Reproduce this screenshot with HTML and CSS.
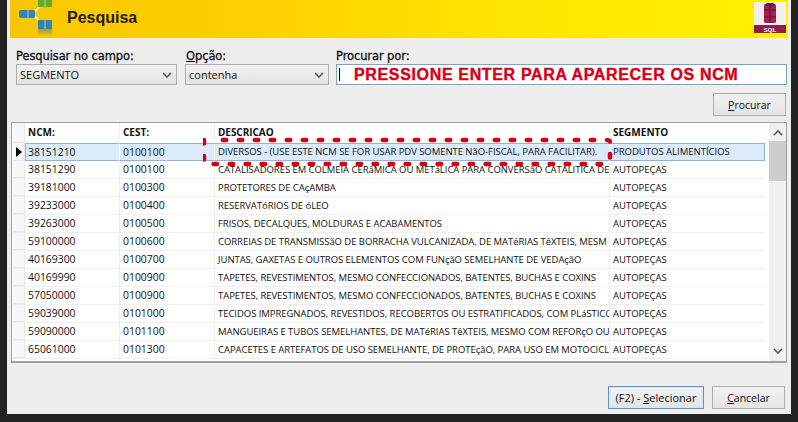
FILE: index.html
```html
<!DOCTYPE html>
<html lang="pt-BR">
<head>
<meta charset="utf-8">
<title>Pesquisa</title>
<link rel="stylesheet" href="styles.css">
</head>
<body>
<div class="window">
  <header class="banner">
    <svg class="logo" width="42" height="38" viewBox="0 0 42 38">
      <defs>
        <linearGradient id="fade" x1="0" y1="0" x2="0" y2="1"><stop offset="0" stop-color="#9c9a58"/><stop offset="1" stop-color="#f8c800"/></linearGradient>
      </defs>
      <path d="M25 12 L29 7 M25 16 L29 21" stroke="#f8f0c0" stroke-width="2" fill="none"/>
      <rect x="28" y="-2" width="14" height="9" fill="#62ac2c"/>
      <rect x="34.500" y="-2" width="1" height="9" fill="#b8dc80"/>
      <rect x="9" y="10" width="16" height="8" rx="2" fill="#2f86b4"/>
      <rect x="17.500" y="10" width="1" height="8" fill="#a8d0e8"/>
      <rect x="28" y="20" width="14" height="9" fill="#2f86b4"/>
      <rect x="34.500" y="20" width="1" height="9" fill="#a8d0e8"/>
      <rect x="28" y="29" width="14" height="7" fill="url(#fade)"/>
    </svg>
    <h1 class="banner-title">Pesquisa</h1>
    <div class="sql-badge">
      <svg width="32" height="31" viewBox="0 0 32 31">
        <rect width="32" height="31" fill="#f1eeee"/>
        <rect y="23" width="32" height="8" fill="#8e1c48"/>
        <rect x="10" y="2" width="12" height="19" rx="1.500" fill="#a51f50"/>
        <rect x="12" y="1" width="8" height="3" rx="1" fill="#6d1538"/>
        <path d="M10 8H22M10 15H22M16 4V21" stroke="#5d1030" fill="none"/>
        <text x="16" y="29.500" class="sql-text" text-anchor="middle">SQL</text>
      </svg>
    </div>
  </header>

  <main class="content">
    <section class="filters">
      <div class="field field-campo">
        <label class="field-label">Pesquisar no campo:</label>
        <div class="select"><span>SEGMENTO</span><svg class="chev" width="10" height="6" viewBox="0 0 10 6"><path d="M1 1l4 4 4-4" stroke="#555" stroke-width="1.600" fill="none"/></svg></div>
      </div>
      <div class="field field-opcao">
        <label class="field-label"><u>O</u>pção:</label>
        <div class="select"><span>contenha</span><svg class="chev" width="10" height="6" viewBox="0 0 10 6"><path d="M1 1l4 4 4-4" stroke="#555" stroke-width="1.600" fill="none"/></svg></div>
      </div>
      <div class="field field-busca">
        <label class="field-label">Procurar por:</label>
        <div class="search-box"><i class="caret"></i><span class="hint">PRESSIONE ENTER PARA APARECER OS NCM</span></div>
      </div>
    </section>

    <div class="search-action">
      <button class="btn btn-search"><u>P</u>rocurar</button>
    </div>

    <section class="grid">
      <div class="table-area">
        <div class="row head">
          <div class="ind"></div><div class="c c1">NCM:</div><div class="c c2">CEST:</div><div class="c c3">DESCRICAO</div><div class="c c4">SEGMENTO</div>
        </div>
        <div class="row selected">
          <div class="ind"><i class="arrow"></i></div><div class="c c1">38151210</div><div class="c c2">0100100</div><div class="c c3">DIVERSOS - (USE ESTE NCM SE FOR USAR PDV SOMENTE NãO-FISCAL, PARA FACILITAR).</div><div class="c c4">PRODUTOS ALIMENTÍCIOS</div>
        </div>
        <div class="row">
          <div class="ind"></div><div class="c c1">38151290</div><div class="c c2">0100100</div><div class="c c3">CATALISADORES EM COLMEIA CERâMICA OU METáLICA PARA CONVERSãO CATALITICA DE</div><div class="c c4">AUTOPEÇAS</div>
        </div>
        <div class="row">
          <div class="ind"></div><div class="c c1">39181000</div><div class="c c2">0100300</div><div class="c c3">PROTETORES DE CAçAMBA</div><div class="c c4">AUTOPEÇAS</div>
        </div>
        <div class="row">
          <div class="ind"></div><div class="c c1">39233000</div><div class="c c2">0100400</div><div class="c c3">RESERVATóRIOS DE óLEO</div><div class="c c4">AUTOPEÇAS</div>
        </div>
        <div class="row">
          <div class="ind"></div><div class="c c1">39263000</div><div class="c c2">0100500</div><div class="c c3">FRISOS, DECALQUES, MOLDURAS E ACABAMENTOS</div><div class="c c4">AUTOPEÇAS</div>
        </div>
        <div class="row">
          <div class="ind"></div><div class="c c1">59100000</div><div class="c c2">0100600</div><div class="c c3">CORREIAS DE TRANSMISSãO DE BORRACHA VULCANIZADA, DE MATéRIAS TêXTEIS, MESM</div><div class="c c4">AUTOPEÇAS</div>
        </div>
        <div class="row">
          <div class="ind"></div><div class="c c1">40169300</div><div class="c c2">0100700</div><div class="c c3">JUNTAS, GAXETAS E OUTROS ELEMENTOS COM FUNçãO SEMELHANTE DE VEDAçãO</div><div class="c c4">AUTOPEÇAS</div>
        </div>
        <div class="row">
          <div class="ind"></div><div class="c c1">40169990</div><div class="c c2">0100900</div><div class="c c3">TAPETES, REVESTIMENTOS, MESMO CONFECCIONADOS, BATENTES, BUCHAS E COXINS</div><div class="c c4">AUTOPEÇAS</div>
        </div>
        <div class="row">
          <div class="ind"></div><div class="c c1">57050000</div><div class="c c2">0100900</div><div class="c c3">TAPETES, REVESTIMENTOS, MESMO CONFECCIONADOS, BATENTES, BUCHAS E COXINS</div><div class="c c4">AUTOPEÇAS</div>
        </div>
        <div class="row">
          <div class="ind"></div><div class="c c1">59039000</div><div class="c c2">0101000</div><div class="c c3">TECIDOS IMPREGNADOS, REVESTIDOS, RECOBERTOS OU ESTRATIFICADOS, COM PLáSTICO</div><div class="c c4">AUTOPEÇAS</div>
        </div>
        <div class="row">
          <div class="ind"></div><div class="c c1">59090000</div><div class="c c2">0101100</div><div class="c c3">MANGUEIRAS E TUBOS SEMELHANTES, DE MATéRIAS TêXTEIS, MESMO COM REFORçO OU</div><div class="c c4">AUTOPEÇAS</div>
        </div>
        <div class="row">
          <div class="ind"></div><div class="c c1">65061000</div><div class="c c2">0101300</div><div class="c c3">CAPACETES E ARTEFATOS DE USO SEMELHANTE, DE PROTEçãO, PARA USO EM MOTOCICLE</div><div class="c c4">AUTOPEÇAS</div>
        </div>
      </div>
      <div class="scrollbar">
        <svg class="sb-arrow" width="10" height="6" viewBox="0 0 10 6"><path d="M1 5l4-4 4 4" stroke="#555" stroke-width="1.600" fill="none"/></svg>
        <div class="sb-track"><div class="sb-thumb"></div></div>
        <svg class="sb-arrow" width="10" height="6" viewBox="0 0 10 6"><path d="M1 1l4 4 4-4" stroke="#555" stroke-width="1.600" fill="none"/></svg>
      </div>
      <svg class="highlight" width="420" height="40" viewBox="0 0 420 40">
        <path d="M1 4V25Q1 28 6 28H398Q404 28 407 24V6Q407 4 402 4H12" fill="none" stroke="#d8000f" stroke-width="4.500" stroke-linecap="round" stroke-dasharray="3.500 12.500"/>
      </svg>
    </section>

    <footer class="actions">
      <button class="btn btn-primary">(F2) - <u>S</u>elecionar</button>
      <button class="btn btn-cancel"><u>C</u>ancelar</button>
    </footer>
  </main>
</div>
</body>
</html>
```

FILE: styles.css
```css
* { box-sizing: border-box; }
html, body { margin: 0; padding: 0; }
body {
  width: 798px;
  height: 422px;
  overflow: hidden;
  background: #222;
  font-family: "Open Sans", "Noto Sans", sans-serif;
  color: #111;
}
.window {
  width: 784px;
  height: 414px;
  margin-left: 7px;
  padding: 0 3px;
  background: #eee;
}
.banner {
  height: 38px;
  display: flex;
  align-items: center;
  background: linear-gradient(90deg, #f8c600 0%, #fdd000 30%, #ffe800 70%, #fff000 100%);
  overflow: hidden;
}
.logo { flex: none; }
.banner-title {
  margin: -2px 0 0 15px;
  font: bold 16px "Liberation Sans", sans-serif;
  color: #2a1a00;
  flex: 1;
}
.sql-badge { flex: none; align-self: flex-start; margin: 2px 2px 0 0; line-height: 0; }
.sql-text { font: bold 6px "Liberation Sans", sans-serif; fill: #fff; }
.content { padding: 10px 0 0 1px; }
.filters { display: flex; gap: 11px; padding-left: 5px; }
.field { display: flex; flex-direction: column; }
.field-campo { width: 161px; }
.field-opcao { width: 144px; margin-left: -3px; }
.field-opcao .field-label { padding-left: 1px; }
.field-busca { width: 451px; margin-left: -4px; }
.field-label {
  font: 11.500px "DejaVu Sans", sans-serif;
  -webkit-text-stroke: .3px #111;
  height: 16px;
  line-height: 16px;
  letter-spacing: -.1px;
  white-space: nowrap;
}
.select {
  height: 21px;
  border: 1px solid #adadad;
  background: linear-gradient(#f2f2f2, #e3e3e3);
  display: flex;
  align-items: center;
  justify-content: space-between;
  padding: 0 3px;
  font-size: 11px;
}
.chev { margin-right: 1px; }
.search-box {
  height: 21px;
  background: #fff;
  border: 1px solid #7aa3c8;
  display: flex;
  align-items: center;
  padding-left: 2px;
}
.caret { width: 1px; height: 13px; background: #000; flex: none; }
.hint {
  margin-left: 14px;
  font: bold 16px "Liberation Sans", sans-serif;
  letter-spacing: .65px;
  -webkit-text-stroke: .4px #d6001a;
  color: #d6001a;
  white-space: nowrap;
}
.search-action { display: flex; justify-content: flex-end; padding: 8px 2px 0 0; height: 38px; }
.btn {
  font-family: "Open Sans", "Noto Sans", sans-serif;
  font-size: 11px;
  color: #111;
  background: linear-gradient(#f2f2f2, #e4e4e4);
  border: 1px solid #adadad;
  padding: 0;
  height: 23px;
}
.btn-search { width: 73px; font-size: 10.500px; }
.grid {
  position: relative;
  width: 776px;
  height: 241px;
  border: 1px solid #a0a0a0;
  border-bottom-width: 2px;
  background: #fff;
  display: flex;
  justify-content: space-between;
  padding: 0 0 0 1px;
  margin-top: -1px;
}
.table-area { width: 752px; overflow: hidden; }
.row {
  display: flex;
  height: 18px;
  font-size: 9.500px;
  line-height: 17px;
  border-bottom: 1px solid #efefef;
}
.ind {
  width: 12px;
  flex: none;
  border-right: 1px solid #e8e8e8;
  background: #f6f6f6;
  display: flex;
  align-items: center;
  justify-content: center;
  border-bottom: 1px solid #e6e6e6;
}
.arrow {
  width: 0;
  height: 0;
  border-left: 6px solid #000;
  border-top: 5px solid transparent;
  border-bottom: 5px solid transparent;
}
.c {
  flex: none;
  padding-left: 3px;
  border-right: 1px solid #efefef;
  overflow: hidden;
  white-space: nowrap;
}
.c1 { width: 95px; font-size: 10.400px; }
.c2 { width: 95px; font-size: 10.400px; }
.c3 { width: 395px; letter-spacing: -.05px; }
.c4 { width: 155px; border-right: none; }
.head {
  height: 20px;
  line-height: 19px;
  font-weight: 700;
  font-size: 10px;
  border-bottom: none;
}
.head .c { font-size: 10px; }
.selected { border-bottom: none; line-height: 16px; }
.selected .c {
  background: #dcebfb;
  border-top: 1px solid #8fb4d8;
  border-bottom: 1px solid #8fb4d8;
  border-right-color: #f4f9fe;
}
.selected .c1 { border-left: 1px solid #8fb4d8; padding-left: 2px; }
.selected .c4 { border-right: 1px solid #8fb4d8; }
.scrollbar {
  width: 17px;
  background: #f0f0f0;
  display: flex;
  flex-direction: column;
  align-items: center;
  justify-content: space-between;
  padding: 7px 0;
}
.sb-track { flex: 1; width: 100%; padding-top: 5px; }
.sb-thumb { height: 40px; background: #cdcdcd; }
.highlight { position: absolute; left: 191px; top: 13px; pointer-events: none; }
.actions { display: flex; justify-content: flex-end; gap: 8px; padding: 23px 3px 0 0; }
.btn-primary {
  width: 96px;
  border-color: #5b95c5;
  box-shadow: inset 0 0 0 1px #d5e6f3;
}
.btn-cancel { width: 73px; font-size: 10.500px; }
```
